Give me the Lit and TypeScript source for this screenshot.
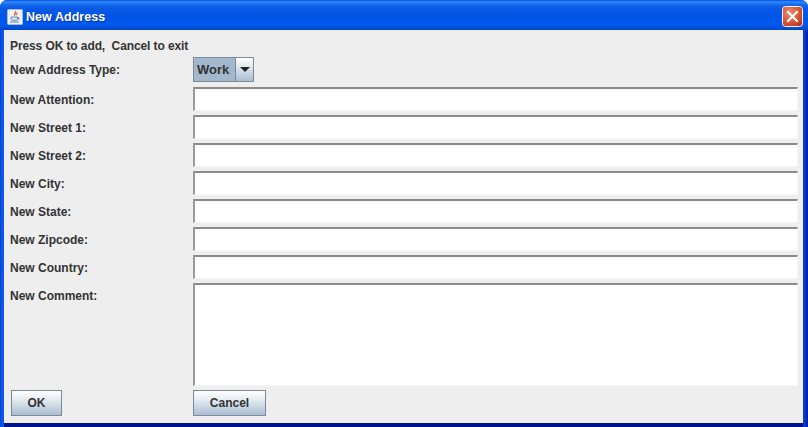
import { LitElement, html, css } from "lit";
import { customElement } from "lit/decorators.js";

@customElement("app-root")
export class AppRoot extends LitElement {
  static styles = css`
    :host { display: block; width: 808px; height: 427px; overflow: hidden; font-family: "Liberation Sans", Arial, sans-serif; }
    .win { width: 808px; height: 427px; box-sizing: border-box; display: flex; flex-direction: column; border-radius: 7px 7px 0 0;
      background: linear-gradient(90deg, #0a3fd0 0, #0a58ea 2px, #0a58ea 4px, #0a3fd0 calc(100% - 5px), #0831c9 calc(100% - 2px), #00138c 100%); }
    .title { height: 30px; flex: none; box-sizing: border-box; display: flex; align-items: center; padding: 3px 5px 0 7px; gap: 3px;
      border-radius: 7px 7px 0 0;
      background: linear-gradient(180deg, #0a4fd6 0, #2f8cff 2px, #1a6ff0 4px, #0a5ae6 8px, #0055e5 16px, #0059ee 25px, #0047c8 100%); }
    .title span { color: #fff; font: bold 12.5px "Liberation Sans", sans-serif; letter-spacing: 0.05px; text-shadow: 1px 1px 0 #0a2f9c; flex: 1; }
    .ticon, .close { display: block; flex: none; }
    .body { flex: 1; margin: 0 5px 4px 4px; background: #eeeeee; padding: 9px 5px 0 6px; box-sizing: border-box; color: #333333; font: bold 12px "Liberation Sans", sans-serif; display: flex; flex-direction: column; box-shadow: 0 4px 0 #00138c; }
    .hint { height: 15px; line-height: 14px; white-space: pre; margin-bottom: 3px; letter-spacing: -0.1px; }
    .row { display: flex; height: 24px; margin-bottom: 4px; }
    .row label { width: 183px; flex: none; line-height: 26px; }
    .row.type { height: 26px; margin-bottom: 4px; }
    .row.area { height: 103px; margin-bottom: 4px; }
    .field { flex: 1; background: #fff; box-sizing: border-box; border-top: 2px solid #8a8a8a; border-left: 2px solid #9a9a9a; border-right: 1px solid #f6f6f6; border-bottom: 1px solid #f6f6f6; }
    .combo { display: flex; width: 61px; height: 25px; box-sizing: border-box; border: 1px solid #7a8a99; }
    .combo .val { width: 41px; background: #a3b8cc; line-height: 23px; padding-left: 3px; box-sizing: border-box; font-size: 13px; color: #333; }
    .combo .arr { flex: 1; border-left: 1px solid #7a8a99; background: linear-gradient(180deg, #ffffff, #a9bed3); display: flex; align-items: center; justify-content: center; }
    .tri { width: 0; height: 0; border-left: 5px solid transparent; border-right: 5px solid transparent; border-top: 5px solid #222; }
    .btns { display: flex; height: 26px; }
    .btnc { width: 183px; flex: none; }
    button { display: block; height: 26px; box-sizing: border-box; padding: 0; border: 1px solid #7a8a99; background: linear-gradient(180deg, #ffffff 0%, #eef2f6 25%, #a9bed3 100%); font: bold 12px "Liberation Sans", sans-serif; color: #333333; }
    .ok { width: 51px; margin-left: 1px; }
    .cancel { width: 73px; }
  `;

  render() {
    const fields = ["New Attention:", "New Street 1:", "New Street 2:", "New City:", "New State:", "New Zipcode:", "New Country:"];
    return html`
      <div class="win">
        <div class="title">
          <svg class="ticon" width="16" height="16" viewBox="0 0 16 16">
            <rect x="0.5" y="0.5" width="15" height="15" rx="1" fill="#eef1f6" stroke="#a8b8d4"/>
            <path d="M8.500 2c1 1.500-2 2.500-.8 4.500M10 3.500c.3 1.200-1.300 1.800-.8 3" fill="none" stroke="#e0572f" stroke-width="1.200"/>
            <path d="M4 8h6.500v1.800c0 1.200-1 1.700-3.200 1.700S4 11 4 9.800z" fill="#d4e0f0" stroke="#5577aa" stroke-width="0.800"/>
            <path d="M10.500 8.700h1.500v1.300l-1.500.6M3 13h9" fill="none" stroke="#5577aa" stroke-width="0.900"/>
          </svg>
          <span>New Address</span>
          <svg class="close" width="21" height="21" viewBox="0 0 21 21">
            <defs><radialGradient id="cg" cx="35%" cy="30%" r="85%"><stop offset="0" stop-color="#e98a6e"/><stop offset="0.6" stop-color="#d8532f"/><stop offset="1" stop-color="#b5301a"/></radialGradient></defs>
            <rect x="0.500" y="0.500" width="20" height="20" rx="3" fill="url(#cg)" stroke="#f2f2f2"/>
            <path d="M6 6l9 9M15 6l-9 9" stroke="#fff" stroke-width="2.200" stroke-linecap="square"/>
          </svg>
        </div>
        <div class="body">
          <div class="hint">Press OK to add,  Cancel to exit</div>
          <div class="row type">
            <label>New Address Type:</label>
            <div class="combo"><div class="val">Work</div><div class="arr"><div class="tri"></div></div></div>
          </div>
          ${fields.map((f) => html`<div class="row"><label>${f}</label><div class="field"></div></div>`)}
          <div class="row area"><label>New Comment:</label><div class="field"></div></div>
          <div class="btns">
            <div class="btnc"><button class="ok">OK</button></div>
            <button class="cancel">Cancel</button>
          </div>
        </div>
      </div>
    `;
  }
}
